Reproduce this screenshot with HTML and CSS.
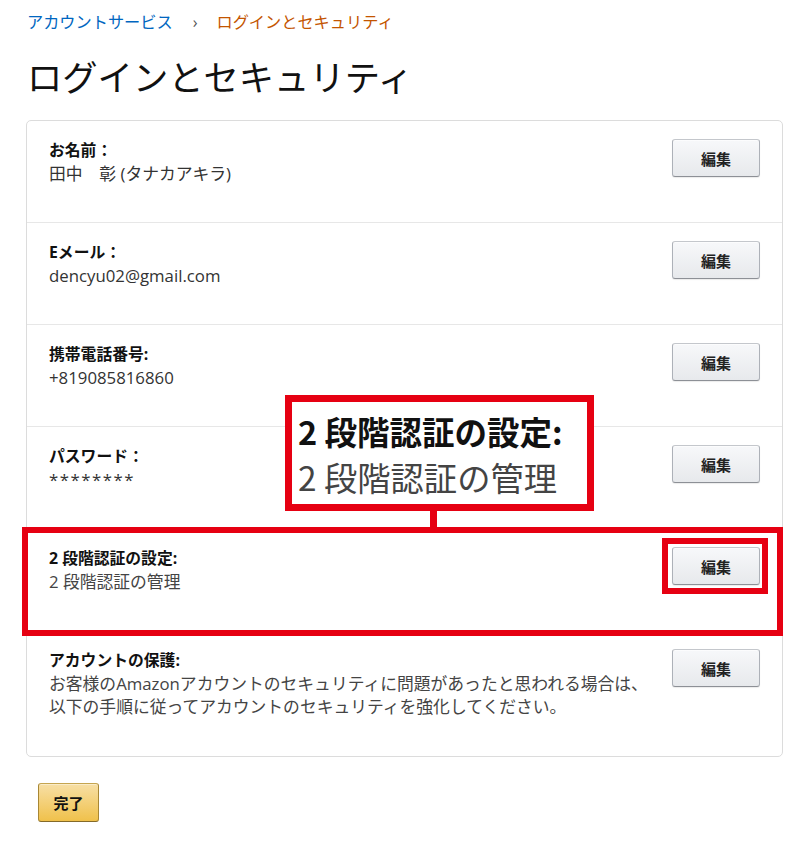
FILE: index.html
```html
<!DOCTYPE html>
<html lang="ja">
<head>
<meta charset="utf-8">
<title>ログインとセキュリティ</title>
<link rel="stylesheet" href="styles.css">
</head>
<body>
<div class="page">
  <nav class="crumbs">
    <a class="crumb-link" href="#">アカウントサービス</a>
    <span class="crumb-sep">›</span>
    <span class="crumb-current">ログインとセキュリティ</span>
  </nav>
  <h1 class="title">ログインとセキュリティ</h1>

  <div class="card-wrap">
    <div class="card">
      <div class="row">
        <div class="info">
          <div class="label">お名前：</div>
          <div class="value">田中　彰 (タナカアキラ)</div>
        </div>
        <button class="btn">編集</button>
      </div>
      <div class="row">
        <div class="info">
          <div class="label">Eメール：</div>
          <div class="value">dencyu02@gmail.com</div>
        </div>
        <button class="btn">編集</button>
      </div>
      <div class="row">
        <div class="info">
          <div class="label">携帯電話番号:</div>
          <div class="value">+819085816860</div>
        </div>
        <button class="btn">編集</button>
      </div>
      <div class="row">
        <div class="info">
          <div class="label">パスワード：</div>
          <div class="value stars">********</div>
        </div>
        <button class="btn">編集</button>
      </div>
      <div class="row">
        <div class="info">
          <div class="label">2 段階認証の設定:</div>
          <div class="value muted">2 段階認証の管理</div>
        </div>
        <button class="btn">編集</button>
      </div>
      <div class="row last">
        <div class="info">
          <div class="label">アカウントの保護:</div>
          <div class="value muted">お客様のAmazonアカウントのセキュリティに問題があったと思われる場合は、<br>以下の手順に従ってアカウントのセキュリティを強化してください。</div>
        </div>
        <button class="btn">編集</button>
      </div>
    </div>

    <div class="hl-row"></div>
    <div class="hl-btn"></div>
    <div class="connector"></div>
    <div class="callout">
      <div class="callout-title">2 段階認証の設定:</div>
      <div class="callout-sub">2 段階認証の管理</div>
    </div>
  </div>

  <button class="done">完了</button>
</div>
</body>
</html>
```
FILE: styles.css
```css
* { box-sizing: border-box; }
html, body { margin: 0; padding: 0; background: #fff; }
body {
  font-family: "Open Sans", "Noto Sans CJK JP", sans-serif;
  color: #111;
}
.page {
  padding: 11px 17px 0 26px;
  display: flex;
  flex-direction: column;
  align-items: flex-start;
}
.crumbs {
  display: flex;
  align-items: center;
  font-size: 16.2px;
  line-height: 22px;
  padding-left: 1px;
}
.crumb-link { color: #0066c0; text-decoration: none; }
.crumb-sep { color: #555; margin: 0 19px 0 20px; font-size: 16px; }
.crumb-current { color: #c45500; }
.title {
  margin: 24px 0 0 1px;
  font-weight: 400;
  font-size: 35.3px;
  line-height: 41px;
  color: #111;
}
.card-wrap {
  position: relative;
  margin-top: 22px;
  width: 757px;
}
.card {
  border: 1px solid #dcdcdc;
  border-radius: 5px;
  background: #fff;
}
.row {
  display: flex;
  justify-content: space-between;
  align-items: flex-start;
  padding: 18px 22px 37px 22px;
  border-bottom: 1px solid #e7e7e7;
}
.row.last { border-bottom: 0; padding-bottom: 38px; }
.label {
  font-size: 15.8px;
  line-height: 23px;
  font-weight: 700;
  color: #111;
}
.value {
  font-size: 16.8px;
  line-height: 23px;
  color: #333;
}
.value.stars { letter-spacing: 1.5px; }
.value.muted { color: #444; }
.btn {
  width: 88px;
  height: 38px;
  flex: none;
  font-family: "Noto Sans CJK JP", sans-serif;
  font-size: 15px;
  font-weight: 700;
  color: #222;
  background: linear-gradient(#f7f8fa, #e7e9ec);
  border: 1px solid #adb1b8;
  border-top-color: #c4c7cc;
  border-bottom-color: #8d9096;
  border-radius: 3px;
  box-shadow: inset 0 1px 0 rgba(255,255,255,.6), 0 1px 1px rgba(0,0,0,.08);
  padding: 0;
}
.hl-row {
  position: absolute;
  left: -4px;
  top: 407px;
  width: 761px;
  height: 109px;
  border: 6px solid #e60012;
}
.hl-btn {
  position: absolute;
  left: 636px;
  top: 418px;
  width: 106px;
  height: 56px;
  border: 6px solid #e60012;
}
.connector {
  position: absolute;
  left: 404px;
  top: 388px;
  width: 7px;
  height: 22px;
  background: #e60012;
}
.callout {
  position: absolute;
  left: 259px;
  top: 275px;
  width: 309px;
  height: 116px;
  border: 7px solid #e60012;
  background: #fff;
  padding: 6px 0 0 6px;
  font-family: "Noto Sans CJK JP", sans-serif;
}
.callout-title {
  font-size: 32.5px;
  line-height: 46px;
  font-weight: 700;
  color: #111;
  white-space: nowrap;
}
.callout-sub {
  font-size: 33.3px;
  line-height: 46px;
  color: #444;
  white-space: nowrap;
}
.done {
  margin: 26px 0 0 12px;
  width: 61px;
  height: 39px;
  font-family: "Noto Sans CJK JP", sans-serif;
  font-size: 15px;
  font-weight: 700;
  color: #111;
  background: linear-gradient(#f7dfa5, #f0c14b);
  border: 1px solid #a88734;
  border-top-color: #c5a550;
  border-bottom-color: #846a29;
  border-radius: 3px;
  box-shadow: inset 0 1px 0 rgba(255,255,255,.4);
  padding: 0;
}
```
